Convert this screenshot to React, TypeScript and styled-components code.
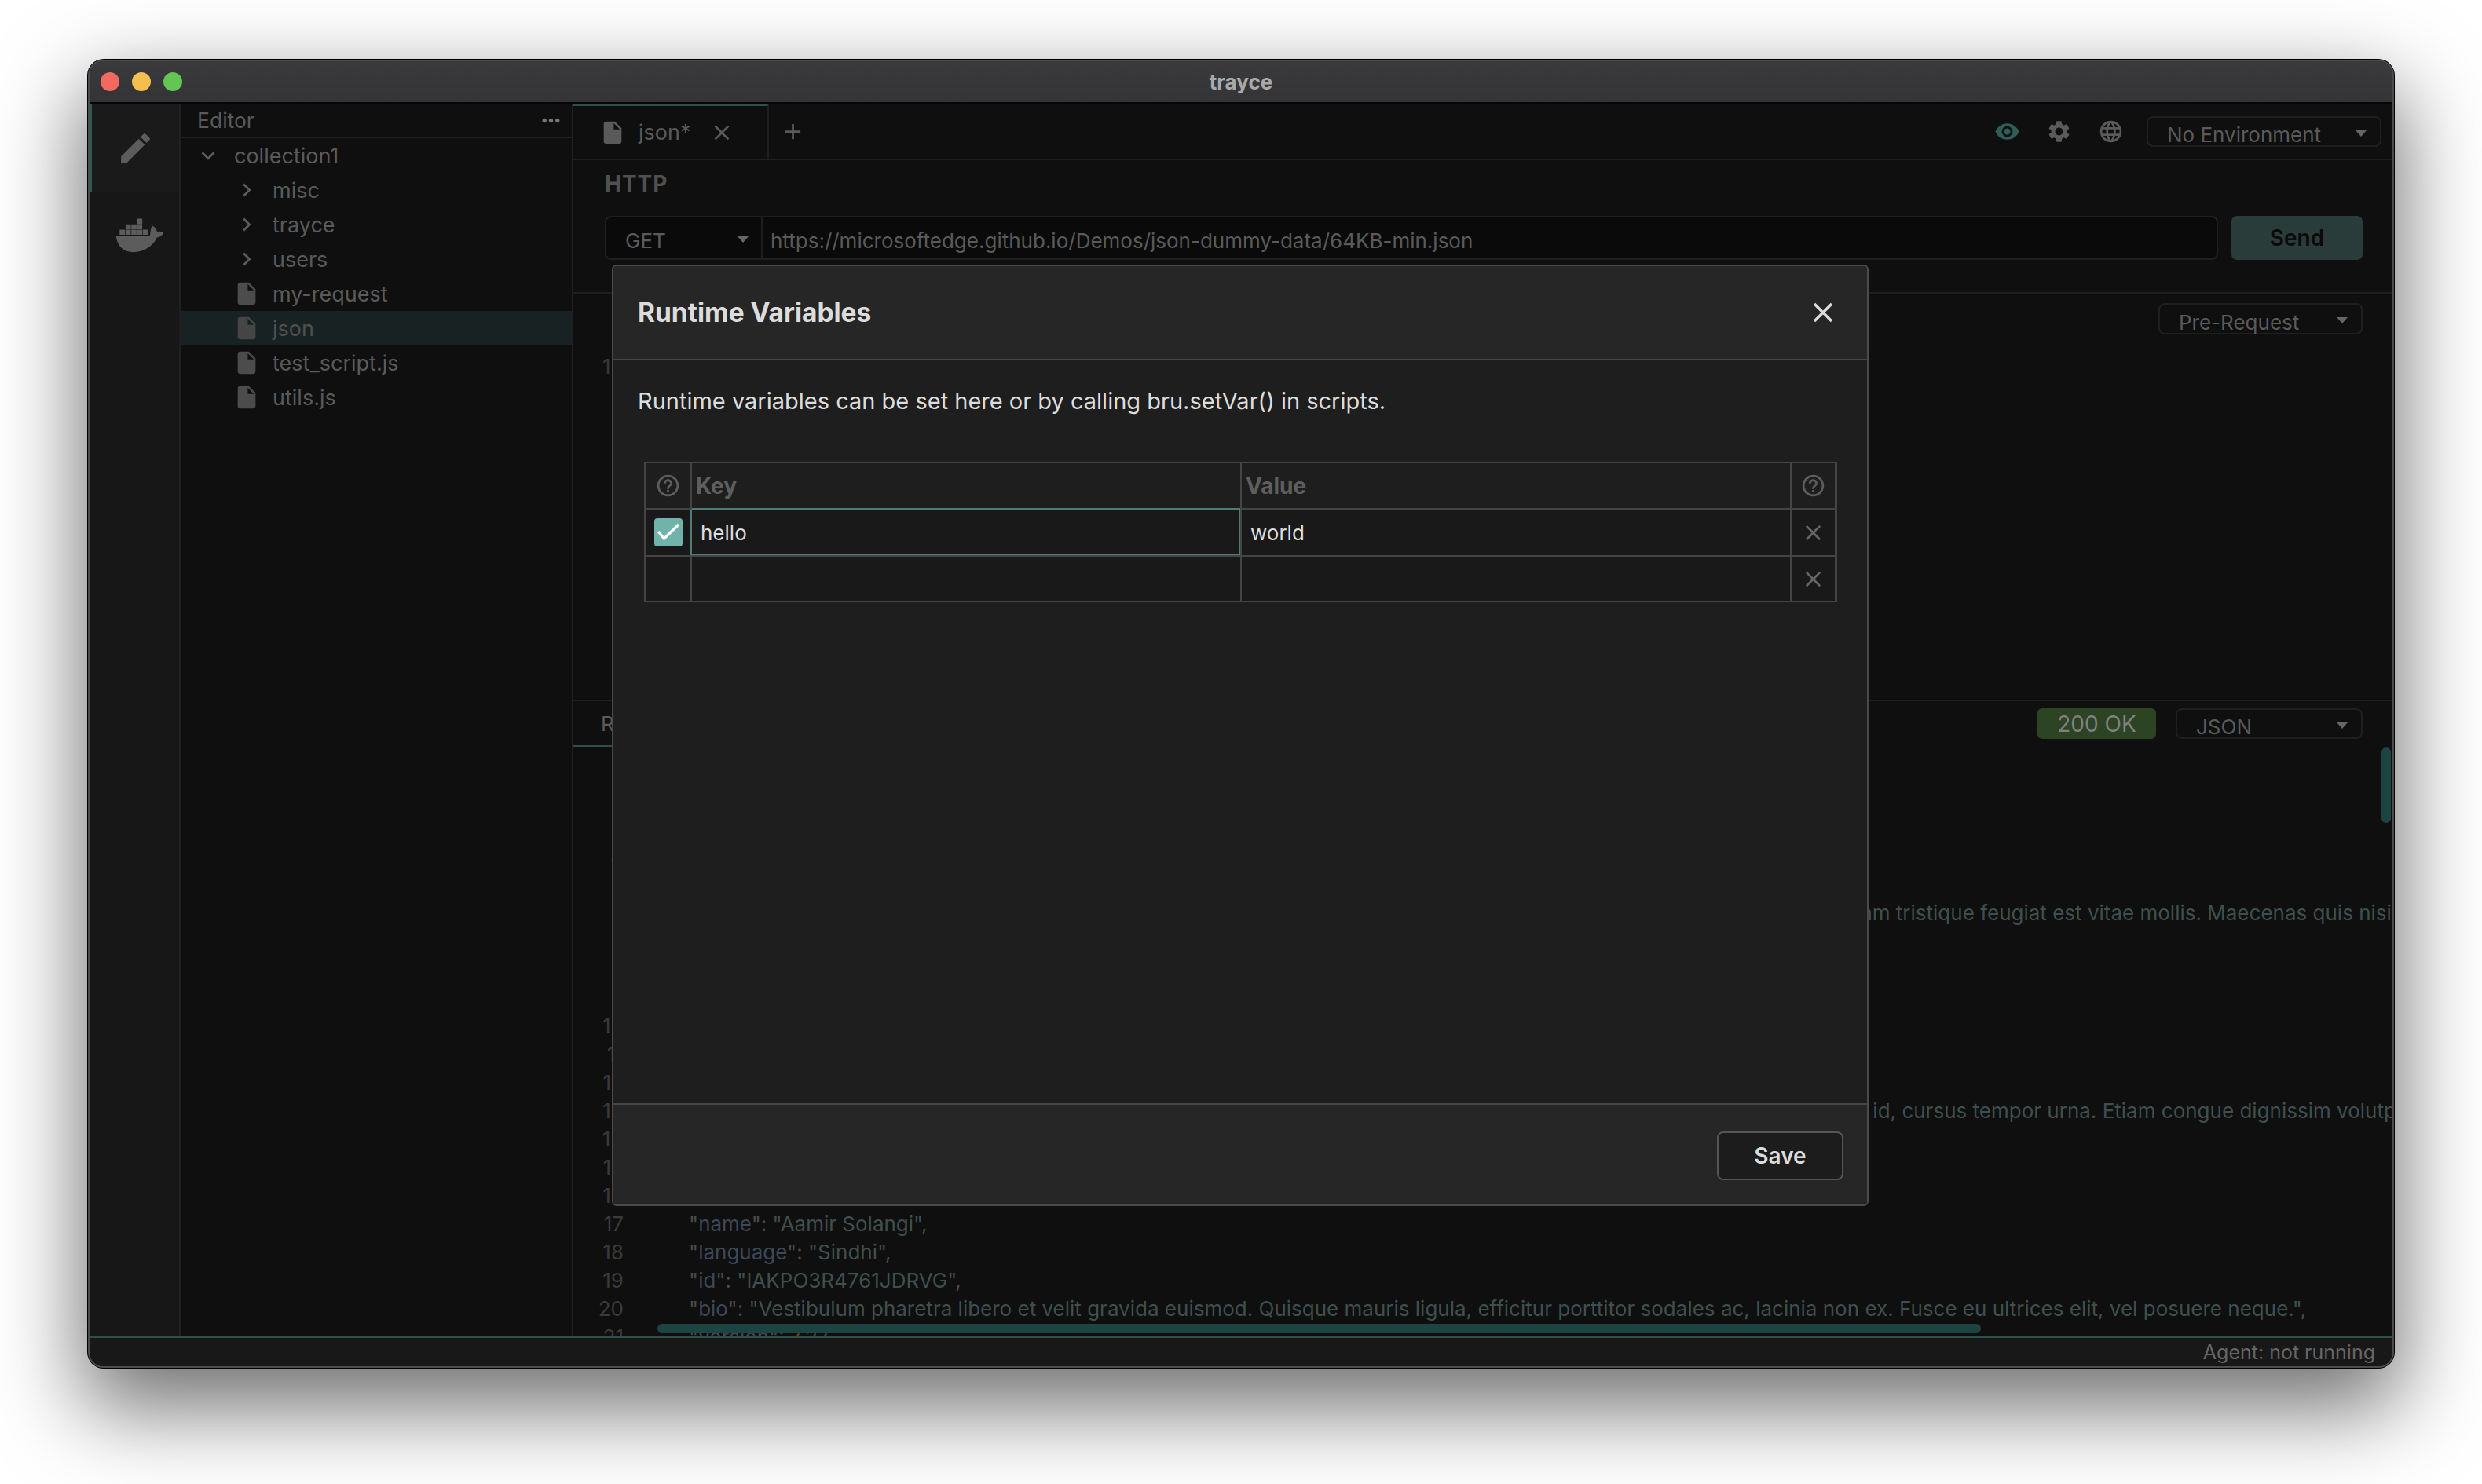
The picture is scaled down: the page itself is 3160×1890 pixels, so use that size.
import React from "react";
import styled, { createGlobalStyle } from "styled-components";
import {
  MdAdd,
  MdChevronRight,
  MdClose,
  MdEdit,
  MdExpandMore,
  MdHelpOutline,
  MdInsertDriveFile,
  MdLanguage,
  MdMoreHoriz,
  MdSettings,
  MdVisibility
} from "react-icons/md";

const GlobalStyle = createGlobalStyle`
  html, body {
    margin: 0;
    padding: 0;
    background: #ffffff;
  }
  * {
    box-sizing: border-box;
  }
`;

const Page = styled.div`
  width: 3160px;
  height: 1890px;
  padding: 76px 112px 148px 112px;
  overflow: hidden;
  font-family: Inter, "Liberation Sans", sans-serif;
  font-size: 26px;
  color: #5e5e5e;
`;

const Window = styled.div`
  display: flex;
  flex-direction: column;
  width: 2936px;
  height: 1666px;
  border: 2px solid #4c4c4c;
  border-radius: 20px;
  overflow: hidden;
  background: #0f0f0f;
  box-shadow: 0 0 0 1px #000000, 0 44px 110px 8px rgba(0, 0, 0, 0.56);
`;

const TitleBar = styled.div`
  display: grid;
  grid-template-columns: 1fr auto 1fr;
  align-items: center;
  height: 54px;
  flex: none;
  padding: 0 14px;
  background: linear-gradient(#3a3a3c, #343436);
  border-bottom: 2px solid #050505;
`;

const Lights = styled.div`
  display: flex;
  gap: 16px;
`;

const Light = styled.span<{ $color: string }>`
  width: 24px;
  height: 24px;
  border-radius: 50%;
  background: ${p => p.$color};
`;

const Title = styled.div`
  font-size: 26px;
  font-weight: 700;
  color: #a9a9a9;
`;

const Body = styled.div`
  position: relative;
  display: flex;
  flex: 1;
  min-height: 0;
`;

const ActivityBar = styled.div`
  width: 116px;
  flex: none;
  background: #171717;
  border-right: 2px solid #202020;
`;

const ActivityItem = styled.div<{ $active?: boolean }>`
  display: flex;
  align-items: center;
  justify-content: center;
  height: 112px;
  background: ${p => (p.$active ? "#1a1a1a" : "transparent")};
  border-left: 3px solid ${p => (p.$active ? "#2f5753" : "transparent")};
  color: #5c5c5c;
`;

const DockerSvg = styled.svg`
  margin-left: 12px;
`;

const Sidebar = styled.div`
  width: 500px;
  flex: none;
  background: #0f0f0f;
  border-right: 2px solid #202020;
  font-size: 27px;
`;

const SidebarHeader = styled.div`
  display: flex;
  align-items: center;
  justify-content: space-between;
  height: 44px;
  padding: 0 10px 0 21px;
  border-bottom: 2px solid #1f1f1f;
  font-size: 26.5px;
  color: #5a5a5a;
`;

const TreeRow = styled.div<{ $depth: number; $selected?: boolean }>`
  display: flex;
  align-items: center;
  gap: 16px;
  height: 44px;
  padding-left: ${p => (p.$depth === 0 ? 18 : 67)}px;
  background: ${p => (p.$selected ? "#182222" : "transparent")};
  color: ${p => (p.$selected ? "#505050" : "#5a5a5a")};

  svg {
    color: ${p => (p.$selected ? "#454545" : "#4c4c4c")};
  }
`;

const Chevron = styled.span`
  display: flex;
  color: #5a5a5a;

  svg {
    color: #5a5a5a;
  }
`;

const Main = styled.div`
  display: flex;
  flex-direction: column;
  flex: 1;
  min-width: 0;
`;

const TabBar = styled.div`
  display: flex;
  align-items: stretch;
  height: 72px;
  flex: none;
  border-bottom: 2px solid #1e1e1e;
`;

const Tab = styled.div`
  display: flex;
  align-items: center;
  width: 249px;
  padding-left: 33px;
  border-top: 3px solid #2d504c;
  border-right: 2px solid #1e1e1e;
  font-size: 27px;
  color: #5a5a5a;
`;

const TabLabel = styled.span`
  margin: 0 24px 0 16px;
`;

const AddTab = styled.div`
  display: flex;
  align-items: center;
  padding-left: 14px;
  color: #5a5a5a;
`;

const TabActions = styled.div`
  display: flex;
  align-items: center;
  gap: 29px;
  margin-left: auto;
  padding-right: 14px;
  color: #5a5a5a;
`;

const IconGroup = styled.div`
  display: flex;
  align-items: center;
  gap: 33px;
`;

const EyeIcon = styled(MdVisibility)`
  color: #2f5d58;
`;

const Select = styled.div<{ $width: number; $height: number }>`
  position: relative;
  display: flex;
  align-items: flex-end;
  width: ${p => p.$width}px;
  height: ${p => p.$height}px;
  padding: 0 0 0 24px;
  border: 2px solid #1f1f1f;
  border-radius: 8px;
  line-height: 26px;
  color: #5a5a5a;
`;

const Caret = styled.span`
  position: absolute;
  right: 17px;
  top: 16px;
  width: 0;
  height: 0;
  border-left: 7px solid transparent;
  border-right: 7px solid transparent;
  border-top: 8px solid #666666;
`;

const HttpSection = styled.div`
  height: 170px;
  flex: none;
  padding: 14px 38px 0 40px;
  border-bottom: 2px solid #1e1e1e;
`;

const SectionLabel = styled.div`
  height: 32px;
  margin-bottom: 25px;
  font-size: 28px;
  font-weight: 700;
  line-height: 32px;
  letter-spacing: 1px;
  color: #505050;
`;

const UrlRow = styled.div`
  display: flex;
  gap: 17px;
  height: 56px;
`;

const UrlField = styled.div`
  display: flex;
  flex: 1;
  background: #0a0a0a;
  border: 2px solid #1f1f1f;
  border-radius: 8px;
`;

const MethodSelect = styled.div`
  position: relative;
  display: flex;
  align-items: center;
  width: 199px;
  padding: 6px 0 0 24px;
  border-right: 2px solid #1f1f1f;
  color: #5a5a5a;
`;

const MethodCaret = styled(Caret)`
  right: 16px;
  top: 24px;
`;

const UrlText = styled.div`
  display: flex;
  align-items: center;
  padding: 6px 0 0 10px;
  color: #5a5a5a;
`;

const SendButton = styled.div`
  display: flex;
  align-items: center;
  justify-content: center;
  width: 167px;
  background: #2a3c3a;
  border-radius: 7px;
  font-size: 28px;
  font-weight: 600;
  color: #0a0a0a;
`;

const ScriptSection = styled.div`
  display: flex;
  flex-direction: column;
  height: 519px;
  flex: none;
  padding: 12px 38px 0 37px;
  border-bottom: 2px solid #1e1e1e;
`;

const ScriptToolbar = styled.div`
  display: flex;
  justify-content: flex-end;
`;

const ScriptLine = styled.div`
  margin-top: 24px;
  line-height: 34px;
  color: #3a3a3a;
`;

const ResponseSection = styled.div`
  position: relative;
  display: flex;
  flex-direction: column;
  flex: 1;
  min-height: 0;
`;

const ResponseHeader = styled.div`
  display: flex;
  align-items: flex-start;
  height: 59px;
  flex: none;
  padding-right: 38px;
`;

const ResponseTab = styled.div`
  width: 220px;
  height: 59px;
  padding: 12px 0 0 35px;
  border-bottom: 3px solid #2d504c;
  color: #5a5a5a;
  line-height: 34px;
`;

const StatusBadge = styled.div`
  display: flex;
  align-items: center;
  justify-content: center;
  width: 151px;
  height: 39px;
  margin: 9px 25px 0 auto;
  background: #2c4424;
  border-radius: 6px;
  font-size: 28px;
  color: #808080;
`;

const ResponseSelect = styled(Select)`
  margin-top: 9px;
`;

const CodeArea = styled.div`
  flex: 1;
  min-height: 0;
  overflow: hidden;
  padding-top: 13px;
`;

const CodeLine = styled.div`
  display: flex;
  height: 36px;
  line-height: 36px;
  white-space: pre;
`;

const LineNo = styled.span`
  width: 64px;
  flex: none;
  text-align: right;
  color: #3a3a3a;
`;

const CodeText = styled.span<{ $lead?: number }>`
  margin-left: ${p => 83 + (p.$lead || 0)}px;
`;

const Punct = styled.span`
  color: #4a4a4a;
`;

const KeyToken = styled.span`
  color: #3c4858;
`;

const StringToken = styled.span`
  color: #3f4f4e;
`;

const NumberToken = styled.span`
  color: #6a3d1e;
`;

const VerticalThumb = styled.div`
  position: absolute;
  top: 59px;
  right: 2px;
  width: 12px;
  height: 96px;
  border-radius: 6px;
  background: #1c4541;
`;

const HorizontalThumb = styled.div`
  position: absolute;
  bottom: 4px;
  left: 107px;
  width: 1685px;
  height: 12px;
  border-radius: 6px;
  background: #1c4541;
`;

const StatusBar = styled.div`
  display: flex;
  align-items: center;
  justify-content: flex-end;
  height: 38px;
  flex: none;
  padding-right: 22px;
  background: #181818;
  border-top: 2px solid #2d504c;
  font-size: 25px;
  color: #666666;
`;

const Overlay = styled.div`
  position: absolute;
  inset: 0;
  display: flex;
  align-items: center;
  justify-content: center;
  padding: 39px 2px 0 0;
`;

const Modal = styled.div`
  display: flex;
  flex-direction: column;
  width: 1600px;
  height: 1199px;
  background: #1e1e1e;
  border: 2px solid #4a4a4a;
  border-radius: 6px;
  overflow: hidden;
`;

const ModalHeader = styled.div`
  display: flex;
  align-items: center;
  justify-content: space-between;
  height: 120px;
  flex: none;
  padding: 0 35px 0 31px;
  background: #262626;
  border-bottom: 2px solid #454545;
`;

const ModalTitle = styled.div`
  font-size: 33.5px;
  font-weight: 700;
  color: #dcdcdc;
`;

const ModalClose = styled.div`
  display: flex;
  color: #dcdcdc;
`;

const ModalBody = styled.div`
  flex: 1;
  padding: 34px 38px 0 39px;
`;

const Description = styled.div`
  height: 36px;
  margin: 0 0 59px -8px;
  font-size: 29px;
  line-height: 36px;
  color: #dcdcdc;
`;

const VarsTable = styled.div`
  display: grid;
  grid-template-columns: 57px 698px 698px 55px;
  grid-template-rows: 57px 58px 56px;
  gap: 2px;
  padding: 2px;
  background: #444444;
`;

const HeadCell = styled.div<{ $center?: boolean }>`
  display: flex;
  align-items: center;
  justify-content: ${p => (p.$center ? "center" : "flex-start")};
  padding-left: ${p => (p.$center ? 0 : 5)}px;
  background: #1e1e1e;
  font-size: 28px;
  font-weight: 700;
  color: #5e5e5e;
`;

const Cell = styled.div<{ $focused?: boolean; $center?: boolean }>`
  display: flex;
  align-items: center;
  justify-content: ${p => (p.$center ? "center" : "flex-start")};
  padding-left: ${p => (p.$center ? 0 : 11)}px;
  background: #191919;
  color: ${p => (p.$center ? "#666666" : "#dcdcdc")};
  box-shadow: ${p =>
    p.$focused
      ? "0 -2px 0 #4f7b77, -2px 0 0 #4f7b77, inset 0 -2px 0 #4f7b77, inset -2px 0 0 #4f7b77"
      : "none"};
`;

const Checkbox = styled.div`
  display: flex;
  align-items: center;
  justify-content: center;
  width: 36px;
  height: 36px;
  background: #70b3ab;
  border-radius: 4px;
`;

const ModalFooter = styled.div`
  display: flex;
  align-items: center;
  justify-content: flex-end;
  height: 129px;
  flex: none;
  padding: 3px 30px 0 0;
  background: #262626;
  border-top: 2px solid #454545;
`;

const SaveButton = styled.div`
  display: flex;
  align-items: center;
  justify-content: center;
  width: 161px;
  height: 62px;
  background: #1c1c1c;
  border: 2px solid #555555;
  border-radius: 8px;
  font-size: 28px;
  font-weight: 600;
  color: #dcdcdc;
`;

const DockerIcon = () => (
  <DockerSvg width="63" height="45" viewBox="50 380 190 135" fill="currentColor">
    <path d="M66 423h21v20H66zM89 423h20v20H89zM111 423h20v20h-20zM133 423h20v20h-20zM155 423h21v20h-21zM89 403h20v19H89zM111 403h20v19h-20zM133 403h20v19h-20zM133 381h20v21h-20z" />
    <path d="M52 446H182C186 430 184 418 192 408C202 414 208 422 210 432C218 428 228 430 235 436C228 448 218 452 210 453C195 485 160 510 118 510C80 510 56 485 52 446Z" />
  </DockerSvg>
);

const CheckMark = () => (
  <svg width="36" height="36" viewBox="0 0 36 36" fill="none">
    <path d="M5 17L12.5 26L31 8" stroke="#ffffff" strokeWidth="3.4" />
  </svg>
);

const folders = ["misc", "trayce", "users"];
const files = ["my-request", "json", "test_script.js", "utils.js"];

type Line = { key?: string; str?: string; num?: string; raw?: string; lead?: number };

const lines: Line[] = [
  { raw: "[" },
  { raw: "  {" },
  { key: "name", str: "Adeel Solangi" },
  { key: "language", str: "Sindhi" },
  { key: "id", str: "V59OF92YF627HFY0" },
  {
    key: "bio",
    lead: -7,
    str: "Donec lobortis eleifend condimentum. Cras dictum dolor lacinia lectus vehicula rutrum. Maecenas quis nisi nunc. Nam tristique feugiat est vitae mollis. Maecenas quis nisi nunc."
  },
  { key: "version", num: "6.1" },
  { raw: "  }," },
  { raw: "  {" },
  { key: "name", str: "Afzal Ghaffar" },
  { key: "language", str: "Sindhi" },
  { key: "id", str: "ENTOCR13RSCLZ6KU" },
  {
    key: "bio",
    str: "Aliquam sollicitudin ante ligula, eget malesuada nibh efficitur et. Pellentesque massa sem, scelerisque sit amet odio id, cursus tempor urna. Etiam congue dignissim volutpat. Vestibulum pharetra libero et velit gravida euismod."
  },
  { key: "version", num: "1.88" },
  { raw: "  }," },
  { raw: "  {" },
  { key: "name", str: "Aamir Solangi" },
  { key: "language", str: "Sindhi" },
  { key: "id", str: "IAKPO3R4761JDRVG" },
  {
    key: "bio",
    str: "Vestibulum pharetra libero et velit gravida euismod. Quisque mauris ligula, efficitur porttitor sodales ac, lacinia non ex. Fusce eu ultrices elit, vel posuere neque."
  },
  { key: "version", num: "7.27" }
];

const CodeRow = ({ line, no }: { line: Line; no: number }) => (
  <CodeLine>
    <LineNo>{no}</LineNo>
    <CodeText $lead={line.lead}>
      {line.raw !== undefined && <Punct>{line.raw}</Punct>}
      {line.key && (
        <>
          <Punct>"</Punct>
          <KeyToken>{line.key}</KeyToken>
          <Punct>": </Punct>
        </>
      )}
      {line.str && <StringToken>"{line.str}"</StringToken>}
      {line.num && <NumberToken>{line.num}</NumberToken>}
      {line.key && <Punct>,</Punct>}
    </CodeText>
  </CodeLine>
);

export default function App() {
  return (
    <Page>
      <GlobalStyle />
      <Window>
        <TitleBar>
          <Lights>
            <Light $color="#f1695f" />
            <Light $color="#f5bf4f" />
            <Light $color="#62c554" />
          </Lights>
          <Title>trayce</Title>
        </TitleBar>
        <Body>
          <ActivityBar>
            <ActivityItem $active>
              <MdEdit size={49} />
            </ActivityItem>
            <ActivityItem>
              <DockerIcon />
            </ActivityItem>
          </ActivityBar>
          <Sidebar>
            <SidebarHeader>
              <span>Editor</span>
              <MdMoreHoriz size={33} color="#777777" />
            </SidebarHeader>
            <TreeRow $depth={0}>
              <Chevron>
                <MdExpandMore size={34} />
              </Chevron>
              <span>collection1</span>
            </TreeRow>
            {folders.map(name => (
              <TreeRow $depth={1} key={name}>
                <Chevron>
                  <MdChevronRight size={34} />
                </Chevron>
                <span>{name}</span>
              </TreeRow>
            ))}
            {files.map(name => (
              <TreeRow $depth={1} $selected={name === "json"} key={name}>
                <MdInsertDriveFile size={34} />
                <span>{name}</span>
              </TreeRow>
            ))}
          </Sidebar>
          <Main>
            <TabBar>
              <Tab>
                <MdInsertDriveFile size={34} />
                <TabLabel>json*</TabLabel>
                <MdClose size={32} />
              </Tab>
              <AddTab>
                <MdAdd size={33} />
              </AddTab>
              <TabActions>
                <IconGroup>
                  <EyeIcon size={33} />
                  <MdSettings size={33} />
                  <MdLanguage size={33} />
                </IconGroup>
                <Select $width={299} $height={39}>
                  No Environment
                  <Caret />
                </Select>
              </TabActions>
            </TabBar>
            <HttpSection>
              <SectionLabel>HTTP</SectionLabel>
              <UrlRow>
                <UrlField>
                  <MethodSelect>
                    GET
                    <MethodCaret />
                  </MethodSelect>
                  <UrlText>https://microsoftedge.github.io/Demos/json-dummy-data/64KB-min.json</UrlText>
                </UrlField>
                <SendButton>Send</SendButton>
              </UrlRow>
            </HttpSection>
            <ScriptSection>
              <ScriptToolbar>
                <Select $width={260} $height={40}>
                  Pre-Request
                  <Caret />
                </Select>
              </ScriptToolbar>
              <ScriptLine>1</ScriptLine>
            </ScriptSection>
            <ResponseSection>
              <ResponseHeader>
                <ResponseTab>Response</ResponseTab>
                <StatusBadge>200 OK</StatusBadge>
                <ResponseSelect $width={238} $height={39}>
                  JSON
                  <Caret />
                </ResponseSelect>
              </ResponseHeader>
              <CodeArea>
                {lines.map((line, i) => (
                  <CodeRow line={line} no={i + 1} key={i} />
                ))}
              </CodeArea>
              <VerticalThumb />
              <HorizontalThumb />
            </ResponseSection>
          </Main>
          <Overlay>
            <Modal>
              <ModalHeader>
                <ModalTitle>Runtime Variables</ModalTitle>
                <ModalClose>
                  <MdClose size={42} />
                </ModalClose>
              </ModalHeader>
              <ModalBody>
                <Description>Runtime variables can be set here or by calling bru.setVar() in scripts.</Description>
                <VarsTable>
                  <HeadCell $center>
                    <MdHelpOutline size={33} />
                  </HeadCell>
                  <HeadCell>Key</HeadCell>
                  <HeadCell>Value</HeadCell>
                  <HeadCell $center>
                    <MdHelpOutline size={33} />
                  </HeadCell>
                  <Cell $center>
                    <Checkbox>
                      <CheckMark />
                    </Checkbox>
                  </Cell>
                  <Cell $focused>hello</Cell>
                  <Cell>world</Cell>
                  <Cell $center>
                    <MdClose size={33} />
                  </Cell>
                  <Cell />
                  <Cell />
                  <Cell />
                  <Cell $center>
                    <MdClose size={33} />
                  </Cell>
                </VarsTable>
              </ModalBody>
              <ModalFooter>
                <SaveButton>Save</SaveButton>
              </ModalFooter>
            </Modal>
          </Overlay>
        </Body>
        <StatusBar>Agent: not running</StatusBar>
      </Window>
    </Page>
  );
}
